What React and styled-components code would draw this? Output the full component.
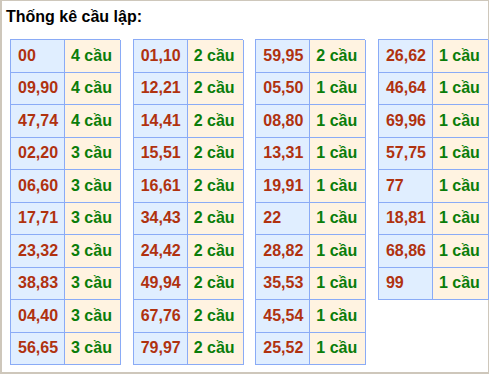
import React from 'react';
import styled, { createGlobalStyle } from 'styled-components';

const GlobalStyle = createGlobalStyle`
  html, body {
    margin: 0;
    padding: 0;
    background: #ffffff;
  }
  body {
    font-family: "Liberation Sans", Arial, sans-serif;
  }
`;

const Panel = styled.div`
  box-sizing: border-box;
  width: 489px;
  height: 374px;
  border-style: solid;
  border-color: #cec7bb;
  border-width: 1px 1px 2px 2px;
  background: #ffffff;
  padding-top: 7px;
`;

const Title = styled.div`
  font-size: 16px;
  line-height: 18px;
  font-weight: bold;
  color: #000000;
  padding-left: 4px;
`;

const Columns = styled.div`
  display: grid;
  grid-template-columns: repeat(4, 110px);
  column-gap: 12.67px;
  align-items: start;
  padding-left: 8px;
  margin-top: 13px;
`;

const Table = styled.div`
  display: grid;
  grid-template-columns: 54px 56px;
  grid-auto-rows: 32.5px;
  box-sizing: border-box;
  border-top: 1px solid #8aabf6;
  border-left: 1px solid #8aabf6;
`;

const Cell = styled.div`
  box-sizing: border-box;
  display: flex;
  align-items: center;
  padding-left: ${p => (p.$count ? '6px' : '7px')};
  border-right: 1px solid #8aabf6;
  border-bottom: 1px solid #8aabf6;
  background: ${p => (p.$count ? '#fff3e1' : '#e0eeff')};
  color: ${p => (p.$count ? '#0a7d0a' : '#b0320f')};
  font-size: 16px;
  font-weight: bold;
  white-space: nowrap;
`;

const data = [
  [['00', 4], ['09,90', 4], ['47,74', 4], ['02,20', 3], ['06,60', 3], ['17,71', 3], ['23,32', 3], ['38,83', 3], ['04,40', 3], ['56,65', 3]],
  [['01,10', 2], ['12,21', 2], ['14,41', 2], ['15,51', 2], ['16,61', 2], ['34,43', 2], ['24,42', 2], ['49,94', 2], ['67,76', 2], ['79,97', 2]],
  [['59,95', 2], ['05,50', 1], ['08,80', 1], ['13,31', 1], ['19,91', 1], ['22', 1], ['28,82', 1], ['35,53', 1], ['45,54', 1], ['25,52', 1]],
  [['26,62', 1], ['46,64', 1], ['69,96', 1], ['57,75', 1], ['77', 1], ['18,81', 1], ['68,86', 1], ['99', 1]],
];

export default function App() {
  return (
    <>
      <GlobalStyle />
      <Panel>
        <Title>Thống kê cầu lập:</Title>
        <Columns>
          {data.map((rows, i) => (
            <Table key={i}>
              {rows.map(([pair, n]) => (
                <React.Fragment key={pair}>
                  <Cell>{pair}</Cell>
                  <Cell $count>{n} cầu</Cell>
                </React.Fragment>
              ))}
            </Table>
          ))}
        </Columns>
      </Panel>
    </>
  );
}
